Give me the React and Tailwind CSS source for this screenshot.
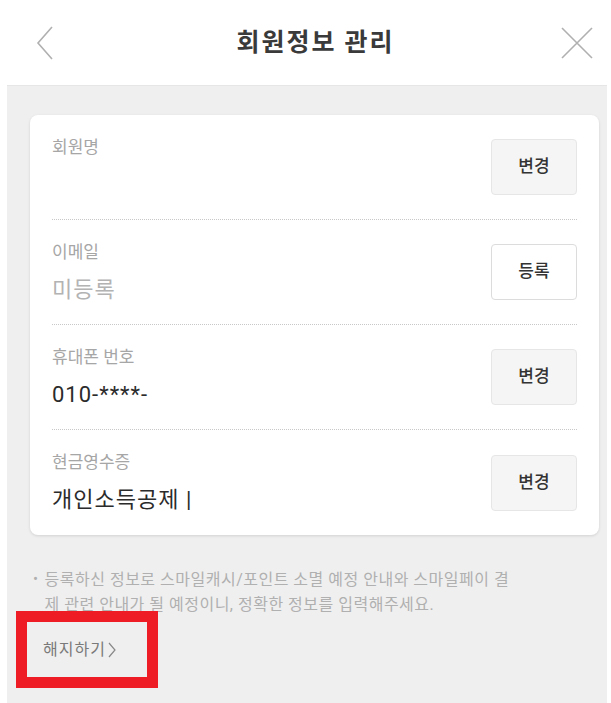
import React from 'react'

const font = { fontFamily: 'Roboto, "Noto Sans CJK KR", sans-serif' }

const rows = [
  { label: '회원명', value: '', action: '변경' },
  { label: '이메일', value: '미등록', muted: true, action: '등록', outline: true },
  { label: '휴대폰 번호', value: '010-****-', action: '변경' },
  { label: '현금영수증', value: '개인소득공제 |', action: '변경' },
]

function InfoRow({ row, last }) {
  return (
    <div className={`flex h-[105px] items-center justify-between ${last ? '' : 'border-b border-dotted border-[#c8c8c8]'}`}>
      <div className="flex h-full flex-col pt-[20px]">
        <p className="text-[17px] leading-[24px] text-[#a6a6a6]">{row.label}</p>
        {row.value && (
          <p className={`mt-[11px] text-[22px] leading-[30px] tracking-[1px] ${row.muted ? 'text-[#b3b3b3]' : 'text-[#2b2b2b]'}`}>{row.value}</p>
        )}
      </div>
      <button
        className={`h-[56px] w-[86px] rounded-[4px] border text-[17px] font-medium text-[#333] ${row.outline ? 'border-[#dcdcdc] bg-white' : 'border-[#e6e6e6] bg-[#f5f5f5]'}`}
      >
        {row.action}
      </button>
    </div>
  )
}

export default function App() {
  return (
    <div className="min-h-[703px] bg-white" style={font}>
      <header className="flex h-[85px] items-center justify-between px-[36px]">
        <svg width="18" height="34" viewBox="0 0 18 34" fill="none">
          <path d="M16 1 L2 17 L16 33" stroke="#b0b0b0" strokeWidth="1.6" />
        </svg>
        <h1 className="ml-[16px] text-[25px] font-bold tracking-[2px] text-[#3a3a3a]">회원정보 관리</h1>
        <svg width="32" height="32" viewBox="0 0 32 32" fill="none" className="-mr-[18px]">
          <path d="M1 1 L31 31 M31 1 L1 31" stroke="#b0b0b0" strokeWidth="1.6" />
        </svg>
      </header>

      <main className="ml-[7px] mr-[4px] min-h-[618px] border-t border-[#e6e6e6] bg-[#efefef] pb-6 pl-[23px] pr-[8px] pt-[29px]">
        <section className="rounded-[8px] bg-white px-[22px] shadow-[0_1px_3px_rgba(0,0,0,0.12)]">
          {rows.map((row, i) => (
            <InfoRow key={row.label} row={row} last={i === rows.length - 1} />
          ))}
        </section>

        <div className="mt-[32px] flex gap-[6px] pl-[3px] text-[16px] leading-[25px] tracking-[0.5px] text-[#b0b0b0]">
          <span className="text-[15px]">•</span>
          <p>
            등록하신 정보로 스마일캐시/포인트 소멸 예정 안내와 스마일페이 결
            <br />
            제 관련 안내가 될 예정이니, 정확한 정보를 입력해주세요.
          </p>
        </div>

        <div className="-ml-[14px] -mt-[6px] inline-flex h-[77px] w-[142px] items-center border-[11px] border-[#ee1c25] pl-[16px]">
          <span className="flex items-center gap-[2px] text-[16px] tracking-[1px] text-[#7a7a7a]">
            해지하기
            <svg width="8" height="16" viewBox="0 0 8 16" fill="none">
              <path d="M1 1 L7 8 L1 15" stroke="#888" strokeWidth="1.2" />
            </svg>
          </span>
        </div>
      </main>
    </div>
  )
}
